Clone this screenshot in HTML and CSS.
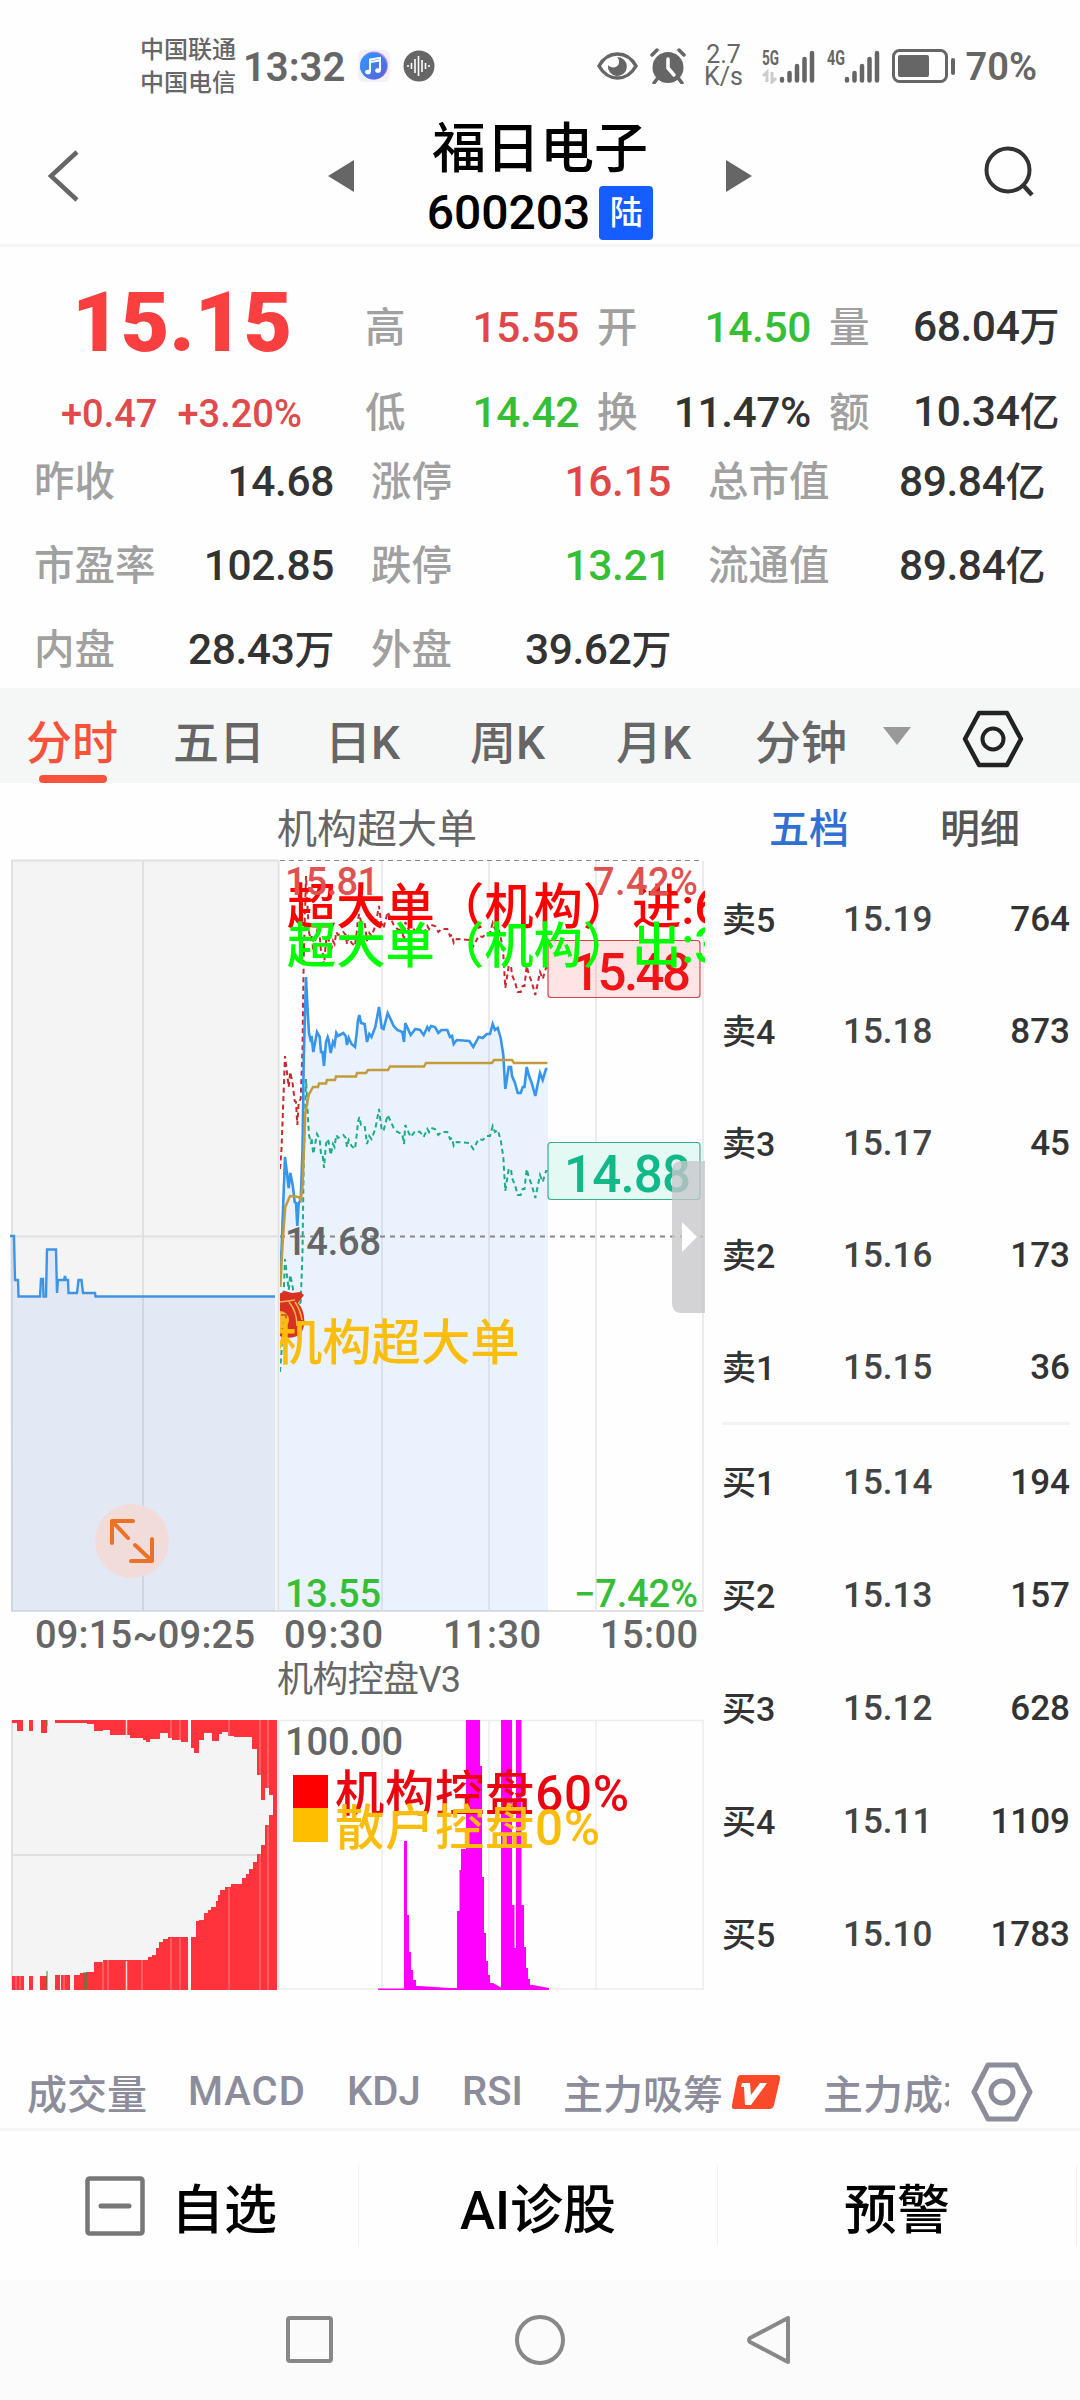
FILE: index.html
```html
<!DOCTYPE html>
<html lang="zh-CN">
<head>
    <meta charset="UTF-8">
    <title>福日电子 600203</title>
    <link rel="stylesheet" href="styles.css">
</head>
<body>
    <!-- Status bar -->
    <div class="status">
        <div class="carrier"><span>中国联通</span><span>中国电信</span></div>
        <span class="clock">13:32</span>
        <svg class="music" width="32" height="32" viewBox="0 0 32 32">
            <defs>
                <linearGradient id="musicFill" x1="0" y1="0" x2="1" y2="1">
                    <stop offset="0" stop-color="#2f9bff"/>
                    <stop offset="1" stop-color="#5b5fd8"/>
                </linearGradient>
            </defs>
            <rect width="32" height="32" rx="6" fill="#f0f2f6"/>
            <circle cx="16" cy="15.500" r="14" fill="#c98af0"/>
            <circle cx="15.500" cy="16" r="13.500" fill="url(#musicFill)"/>
            <path d="M12 22V9.500l10-1.500v12M12 12l10-1.500" fill="none" stroke="#fff" stroke-width="2"/>
            <ellipse cx="10" cy="22" rx="2.800" ry="2.300" fill="#fff"/>
            <ellipse cx="20" cy="20.500" rx="2.800" ry="2.300" fill="#fff"/>
        </svg>
        <svg class="wave" width="32" height="32" viewBox="0 0 32 32">
            <circle cx="16" cy="16" r="15.500" fill="#666"/>
            <path d="M5 15v2M8.500 13v6M12 9v14M15.500 6v20M19 10v12M22.500 13v6M26 15v2" stroke="#fff" stroke-width="1.600"/>
        </svg>
        <div class="status-right">
            <svg width="41" height="34" viewBox="0 0 41 34">
                <path d="M2 17C11 1 30 1 39 17C30 33 11 33 2 17Z" fill="none" stroke="#666" stroke-width="3.500"/>
                <path d="M20 8a9.500 9.500 0 1 1-9 8c3 4 10 3 11-2c.5-3-1-5-2-6Z" fill="#666"/>
            </svg>
            <svg class="alarm" width="36" height="36" viewBox="0 0 36 36">
                <circle cx="18" cy="19.500" r="15.500" fill="#666"/>
                <path d="M2 7l5-5M34 7l-5-5M7 31l-3 4M29 31l3 4" stroke="#666" stroke-width="3.500" stroke-linecap="round"/>
                <path d="M18 11v9l6 7" fill="none" stroke="#fff" stroke-width="3.500" stroke-linecap="round"/>
            </svg>
            <div class="speed"><span>2.7</span><span>K/s</span></div>
            <svg class="signal" width="54" height="36" viewBox="0 0 54 36">
                <text x="0" y="17" textLength="17" lengthAdjust="spacingAndGlyphs">5G</text>
                <path d="M5 34V24l-4 4M10 24v10l4-4" fill="none" stroke="#ccc" stroke-width="3"/>
                <path d="M20 31v1.500M27.500 25v7.500M35 18v14.500M42.500 11v21.500M50 5v27.500" stroke="#666" stroke-width="4.500" stroke-linecap="round"/>
            </svg>
            <svg class="signal" width="54" height="36" viewBox="0 0 54 36">
                <text x="0" y="17" textLength="18" lengthAdjust="spacingAndGlyphs">4G</text>
                <path d="M20 31v1.500M27.500 25v7.500M35 18v14.500M42.500 11v21.500M50 5v27.500" stroke="#666" stroke-width="4.500" stroke-linecap="round"/>
            </svg>
            <svg class="battery" width="64" height="34" viewBox="0 0 64 34">
                <rect x="1.500" y="1.500" width="53" height="31" rx="6" fill="none" stroke="#666" stroke-width="3"/>
                <rect x="6" y="6" width="31" height="22" rx="2" fill="#666"/>
                <rect x="59" y="9" width="4" height="17" rx="2" fill="#666"/>
            </svg>
            <span class="percent">70%</span>
        </div>
    </div>

    <!-- Stock title -->
    <div class="header">
        <svg class="back" width="36" height="56" viewBox="0 0 36 56">
            <path d="M31 4L5 28L31 52" fill="none" stroke="#666" stroke-width="4.500"/>
        </svg>
        <svg class="prev" width="26" height="32" viewBox="0 0 26 32"><path d="M26 0V32L0 16Z" fill="#666"/></svg>
        <div class="stock">
            <div class="stock-name">福日电子</div>
            <div class="stock-code">600203<span class="badge">陆</span></div>
        </div>
        <svg class="next" width="26" height="32" viewBox="0 0 26 32"><path d="M0 0V32L26 16Z" fill="#666"/></svg>
        <svg class="search" width="54" height="54" viewBox="0 0 54 54">
            <circle cx="25" cy="25" r="21.500" fill="none" stroke="#333" stroke-width="4"/>
            <path d="M40 40l9 10" stroke="#333" stroke-width="4.500"/>
        </svg>
    </div>

    <!-- Quote numbers -->
    <div class="quote">
        <div class="quote-top">
            <div class="price-box">
                <div class="price">15.15</div>
                <div class="change"><span>+0.47</span><span>+3.20%</span></div>
            </div>
            <div class="quote-grid">
                <div class="cell"><label>高</label><b class="up">15.55</b></div>
                <div class="cell"><label>开</label><b class="down">14.50</b></div>
                <div class="cell"><label>量</label><b>68.04<i>万</i></b></div>
                <div class="cell"><label>低</label><b class="down">14.42</b></div>
                <div class="cell"><label>换</label><b>11.47%</b></div>
                <div class="cell"><label>额</label><b>10.34<i>亿</i></b></div>
            </div>
        </div>
        <div class="quote-more">
            <div class="cell"><label>昨收</label><b>14.68</b></div>
            <div class="cell"><label>涨停</label><b class="up">16.15</b></div>
            <div class="cell"><label>总市值</label><b>89.84<i>亿</i></b></div>
            <div class="cell"><label>市盈率</label><b>102.85</b></div>
            <div class="cell"><label>跌停</label><b class="down">13.21</b></div>
            <div class="cell"><label>流通值</label><b>89.84<i>亿</i></b></div>
            <div class="cell"><label>内盘</label><b>28.43<i>万</i></b></div>
            <div class="cell"><label>外盘</label><b>39.62<i>万</i></b></div>
        </div>
    </div>

    <!-- Period tabs -->
    <div class="tabs">
        <div class="tab active">分时</div>
        <div class="tab">五日</div>
        <div class="tab">日K</div>
        <div class="tab">周K</div>
        <div class="tab">月K</div>
        <div class="tab">分钟</div>
        <svg class="caret" width="28" height="18" viewBox="0 0 28 18"><path d="M0 0H28L14 18Z" fill="#999"/></svg>
        <svg class="gear" width="62" height="60" viewBox="0 0 62 60">
            <path d="M17 4H45L59 30L45 56H17L3 30Z" fill="none" stroke="#222" stroke-width="4.500" stroke-linejoin="round"/>
            <circle cx="31" cy="30" r="10.500" fill="none" stroke="#222" stroke-width="4"/>
        </svg>
    </div>

    <div class="main">
        <svg class="chart" width="705" height="1217" viewBox="0 783 705 1217">
            <defs>
                <path id="priceLine" d="M280 1270L281.500 1250L285 1157L288.700 1188L290.300 1173L292.700 1185L294.700 1202L296 1203L297.300 1226L298.700 1203L300.700 1200L302.500 1150L303.700 1060L306 977L308 1017L309 1033L311 1042L311.500 1036L313.300 1052L317 1032L319.700 1037L321 1052L322.500 1052L324 1066L326 1042L327.700 1037L328.700 1040L330.700 1053L333 1042L334.500 1045L336.300 1033L338 1036L343.300 1033L345.700 1036L347 1045L348.700 1038L351.500 1044L355 1047L356.700 1033L358 1020L359.300 1015L361 1023L364.700 1024L367 1042L369.300 1034L371.500 1037L375.300 1027L379 1007L381.700 1028L383.500 1029L387.700 1013L393.700 1026L397.300 1030L402.300 1032L404 1042L405.300 1023L410.700 1035L415.300 1029L420 1030L423.700 1035L427.300 1027L429 1030L431 1026L435 1027L438.300 1033L441.500 1030L447.300 1030L450 1037L452 1036L453.700 1044L456.700 1040L469.300 1041L473.300 1047L478.700 1037L482.700 1038L486.700 1034L490 1034L492.700 1024L495 1030L497.700 1028L500.700 1038L503.300 1055L505.300 1089L508.700 1067L511 1067L512 1076L515 1083L517.700 1093L520.700 1093L522.700 1087L524.500 1087L526.700 1067L528.700 1075L531.700 1083L535.300 1096L540 1073L542.700 1080L546 1069L547.500 1069"/>
                <clipPath id="rightPane"><rect x="280" y="861" width="425" height="1130"/></clipPath>
            </defs>

            <!-- minute chart: frame and grid -->
            <text class="title" x="277" y="843">机构超大单</text>
            <rect x="11" y="860" width="266" height="751" fill="#f4f4f4"/>
            <path d="M11 860.500H278M11 1611H704M12 860V1611M143 860V1611M11 1236.500H278M278.500 860V1611" stroke="#e0e0e0" stroke-width="2" fill="none"/>
            <path d="M382 861V1611M489 861V1611M596 861V1611M703 861V1611" stroke="#ebebed" stroke-width="2"/>
            <path d="M280 860.500H703" stroke="#888" stroke-width="1" stroke-dasharray="5 4"/>

            <!-- call auction -->
            <path d="M10 1236H14L15 1280H18L18.500 1296.500H40L41 1279H43L43.500 1296.500H46L47 1249.500H56L57 1293L58 1280H64L65 1276L66 1280H68L68.500 1293H77L78.500 1280H81.500L83 1293H95L95.500 1296.500H275V1611H11Z" fill="#3c78f5" fill-opacity=".09"/>
            <path d="M10 1236H14L15 1280H18L18.500 1296.500H40L41 1279H43L43.500 1296.500H46L47 1249.500H56L57 1293L58 1280H64L65 1276L66 1280H68L68.500 1293H77L78.500 1280H81.500L83 1293H95L95.500 1296.500H275" fill="none" stroke="#3f94e4" stroke-width="2.400"/>

            <!-- trading hours -->
            <path d="M280 1270L285 1157L290 1173L297 1226L301 1200L304 1060L306 977L309 1033L313 1052L317 1032L321 1052L324 1066L328 1037L331 1053L336 1033L343 1033L347 1045L355 1047L359 1015L365 1024L367 1042L375 1027L379 1007L382 1028L388 1013L394 1026L402 1032L404 1042L405 1023L411 1035L415 1029L424 1035L427 1027L435 1027L447 1030L454 1044L457 1040L469 1041L473 1047L479 1037L490 1034L493 1024L501 1038L505 1089L509 1067L518 1093L521 1093L527 1067L535 1096L540 1073L548 1069V1611H280Z" fill="#2f86f5" fill-opacity=".1"/>
            <path d="M280 1236.500H703" stroke="#888" stroke-width="1.800" stroke-dasharray="5 5"/>
            <g clip-path="url(#rightPane)" fill="none">
                <use href="#priceLine" y="-101" stroke="#c82830" stroke-width="2" stroke-dasharray="5 3.500"/>
                <use href="#priceLine" y="102" stroke="#1fab84" stroke-width="2" stroke-dasharray="5 3.500"/>
                <use href="#priceLine" stroke="#3795ea" stroke-width="2.600"/>
                <path d="M280.300 1287L283 1237L285.300 1207L290 1196L298.700 1197L300.700 1200L302.500 1187L305.300 1113L308.700 1095L313 1087H318L319 1083.500H326L327 1080H335L336 1076.500H356L357 1073H366L368 1070H388L390 1066.500H424L426 1063H492L494 1060H512L514 1063H547.500" stroke="#c39a3c" stroke-width="2.500"/>
                <!-- money bag -->
                <g>
                    <path d="M279 1294l6-3 7 2 8-1 4 3-6 8c7 7 9 24 2 31-5 5-15 4-21 2Z" fill="#d8311f"/>
                    <path d="M280 1302l15-2M289 1302c6 7 8 15 8 24M295 1302c4 6 6 12 7 18" fill="none" stroke="#f6b64c" stroke-width="1.500"/>
                    <circle cx="280" cy="1320" r="9" fill="#f7b93a"/>
                    <path d="M281 1315h5v4l-3 5" fill="none" stroke="#c0551c" stroke-width="1.500"/>
                </g>
            </g>
            <g clip-path="url(#rightPane)" class="big">
                <text x="287" y="924" fill="#f00">超大单（机构）进:6</text>
                <rect x="548" y="940.500" width="152" height="57" rx="3" fill="#f00" fill-opacity=".1" stroke="#d04548" stroke-width="1.200"/>
                <text class="box-num" x="571" y="990" textLength="120" fill="#f01418">15.48</text>
                <text x="287" y="963" fill="#0f0">超大单（机构）出:3</text>
                <rect x="548" y="1142.500" width="152" height="57" rx="3" fill="#e5f9f4" stroke="#35b18e" stroke-width="1.200"/>
                <text class="box-num" x="564" y="1192" textLength="127" fill="#10b88a">14.88</text>
                <text x="273" y="1360" fill="#fbbd0c">机构超大单</text>
            </g>
            <g class="axis">
                <text x="285" y="895" textLength="94" fill="#e05250">15.81</text>
                <text x="698" y="895" text-anchor="end" textLength="105" fill="#e05250">7.42%</text>
                <text x="285" y="1255" textLength="96">14.68</text>
                <text x="285" y="1607" textLength="96" fill="#36bf36">13.55</text>
                <text x="698" y="1607" text-anchor="end" textLength="124" fill="#36bf36">−7.42%</text>
                <text x="35" y="1648" textLength="220">09:15~09:25</text>
                <text x="284" y="1648" textLength="99">09:30</text>
                <text x="443" y="1648" textLength="98">11:30</text>
                <text x="600" y="1648" textLength="98">15:00</text>
            </g>
            <circle cx="132" cy="1541" r="37" fill="#f2dcda"/>
            <path d="M133 1521H112V1543M112 1521L128 1538M152 1539V1561H131M152 1561L135 1545" fill="none" stroke="#ea7226" stroke-width="4" stroke-linecap="round" stroke-linejoin="round"/>
            <path d="M705 1161H682Q672 1161 672 1171V1303Q672 1313 682 1313H705Z" fill="#c6c6cb" fill-opacity=".78"/>
            <path d="M682 1222V1252L697 1237Z" fill="#fff"/>

            <!-- control indicator -->
            <text class="title small" x="277" y="1692" textLength="184">机构控盘V3</text>
            <rect x="11" y="1720" width="266" height="270" fill="#f4f4f4"/>
            <path d="M11 1855H277M12 1720V1990M278.500 1720V1990" stroke="#e0e0e0" stroke-width="2"/>
            <path d="M278 1720.500H704M278 1989H704M382 1720V1990M489 1720V1990M596 1720V1990M703 1720V1990" stroke="#ebebed" stroke-width="1.500"/>
            <path d="M12 1720V1723H17V1731H23V1720H29V1731H33V1720H41V1733H47V1720H55V1723H87V1724H94V1731H103V1730H110V1735H130V1738H143V1740H146V1742H150V1739H160V1733H168V1738H172V1740H181V1742H188V1720H191V1748H194V1753H199V1740H204V1733H212V1741H219V1734H222V1732H228V1736H234V1737H252V1749H257V1775H261V1800H265V1788H269V1795H273V1814H277V1720Z" fill="#ff333b"/>
            <path d="M12 1990V1976H24V1990H29V1976H33V1990H40V1976H47V1990H55V1975H60V1990H61V1975H70V1990H74V1975H80V1973H86V1972H94V1962H103V1960H148V1957H152V1955H156V1948H159V1942H163V1939H168V1937H188V1990H191V1937H196V1921H199V1920H204V1913H208V1910H211V1907H216V1901H218V1895H220V1890H225V1887H231V1884H242V1878H246V1874H249V1869H253V1862H257V1854H261V1845H265V1825H269V1815H273V1797H277V1990Z" fill="#ff333b"/>
            <path d="M126.500 1720V1739M126.500 1961V1990" stroke="#f8d8da" stroke-width="1.500"/>
            <path d="M171 1720V1738M180 1720V1740M229 1720V1736M260 1720V1775M268 1720V1788M16 1976V1990M20 1976V1990M64 1975V1990M103 1962V1990M108 1960V1990M142 1960V1990M171 1938V1990M180 1938V1990M229 1888V1990M260 1854V1990M268 1825V1990" stroke="#fff" stroke-opacity=".4" stroke-width="1"/>
            <path d="M47 1720V1726M47 1971V1990M84 1972V1990M86 1972V1990" stroke="#1d9a3c" stroke-width="1"/>
            <path d="M378 1988.500H404V1841H407V1915H409V1952H411V1970H413V1980H416V1986H419L450 1988H457V1911H459.500V1870H461V1849H466V1720H480V1766H482V1877H484V1933H486V1961H488V1975H490V1983H493L501 1987.500V1720H512V1905H514.500V1948H516V1720H521.500V1905H524V1947H526V1968H528V1979H530V1985H533L549 1988V1990H378Z" fill="#ff00ff"/>
            <g class="big">
                <rect x="293" y="1775" width="35" height="33" fill="#f00"/>
                <rect x="293" y="1808" width="35" height="34" fill="#ffbe00"/>
                <text x="335" y="1811" fill="#e90610" textLength="294">机构控盘60%</text>
                <text x="335" y="1845" fill="#fbbd0c" textLength="265">散户控盘0%</text>
            </g>
            <text class="hundred" x="285" y="1755" textLength="118">100.00</text>
        </svg>

        <!-- Order book -->
        <div class="book">
            <div class="book-tabs"><span class="on">五档</span><span>明细</span></div>
            <div class="orders">
                <div class="order"><span>卖5</span><em>15.19</em><strong>764</strong></div>
                <div class="order"><span>卖4</span><em>15.18</em><strong>873</strong></div>
                <div class="order"><span>卖3</span><em>15.17</em><strong>45</strong></div>
                <div class="order"><span>卖2</span><em>15.16</em><strong>173</strong></div>
                <div class="order"><span>卖1</span><em>15.15</em><strong>36</strong></div>
            </div>
            <div class="orders bids">
                <div class="order"><span>买1</span><em>15.14</em><strong>194</strong></div>
                <div class="order"><span>买2</span><em>15.13</em><strong>157</strong></div>
                <div class="order"><span>买3</span><em>15.12</em><strong>628</strong></div>
                <div class="order"><span>买4</span><em>15.11</em><strong>1109</strong></div>
                <div class="order"><span>买5</span><em>15.10</em><strong>1783</strong></div>
            </div>
        </div>
    </div>

    <!-- Indicator tabs -->
    <div class="indicators">
        <div class="indicator-list">
            <span class="vol">成交量</span>
            <span class="macd">MACD</span>
            <span class="kdj">KDJ</span>
            <span class="rsi">RSI</span>
            <span class="main-buy">主力吸筹</span>
            <svg class="vip" width="50" height="36" viewBox="0 0 50 36">
                <path d="M10 1H46Q50 1 49 5L43 31Q42 35 38 35H4Q0 35 1 31L6 5Q7 1 10 1Z" fill="#fb4a2a"/>
                <path d="M11 9h8l1 12 9-12h7L20 31h-6L13 13h-3Z" fill="#fff"/>
            </svg>
            <span>主力成本</span>
        </div>
        <svg class="gear" width="62" height="62" viewBox="0 0 62 62">
            <path d="M17 4H45L59 31L45 58H17L3 31Z" fill="none" stroke="#8c8c9b" stroke-width="5" stroke-linejoin="round"/>
            <circle cx="31" cy="31" r="11" fill="none" stroke="#8c8c9b" stroke-width="5"/>
        </svg>
    </div>

    <!-- Bottom actions -->
    <div class="actions">
        <div class="action">
            <svg width="60" height="60" viewBox="0 0 60 60">
                <rect x="2.500" y="2.500" width="55" height="55" rx="2" fill="none" stroke="#777" stroke-width="4.500"/>
                <path d="M16 30H44" stroke="#777" stroke-width="5" stroke-linecap="round"/>
            </svg>
            <span>自选</span>
        </div>
        <div class="action">AI诊股</div>
        <div class="action">预警</div>
    </div>

    <div class="navbar">
        <svg width="48" height="50" viewBox="0 0 48 50"><rect x="2" y="3" width="43" height="43" rx="2" fill="none" stroke="#888" stroke-width="4"/></svg>
        <svg width="50" height="50" viewBox="0 0 50 50"><circle cx="25" cy="25" r="23" fill="none" stroke="#888" stroke-width="4"/></svg>
        <svg width="48" height="50" viewBox="0 0 48 50"><path d="M42 3V47L4 27Q2 25 4 23Z" fill="none" stroke="#888" stroke-width="4" stroke-linejoin="round"/></svg>
    </div>
</body>
</html>
```
FILE: styles.css
```css
* {
    box-sizing: border-box;
}
body {
    margin: 0;
    width: 1080px;
    height: 2400px;
    overflow: hidden;
    background: #fefefe;
    color: #333;
    font-family: Roboto, "Noto Sans CJK SC", sans-serif;
}
svg {
    display: block;
    flex-shrink: 0;
}

/* status bar */
.status {
    display: flex;
    align-items: center;
    height: 104px;
    padding: 28px 43px 0 140px;
    color: #666;
}
.carrier {
    width: 103px;
    padding-top: 2px;
    font-size: 24px;
    font-weight: 500;
    line-height: 33px;
}
.carrier span {
    display: block;
}
.clock {
    width: 115px;
    padding-top: 2px;
    font-size: 40px;
    font-weight: 600;
}
.wave {
    margin-left: 13px;
}
.status-right {
    display: flex;
    align-items: center;
    margin-left: auto;
}
.alarm {
    margin-left: 12px;
}
.speed {
    width: 42px;
    margin: 0 17px 0 17px;
    font-size: 25px;
    line-height: 22px;
    text-align: center;
}
.speed span {
    display: block;
}
.signal {
    margin-right: 11px;
}
.signal text {
    font-size: 21px;
    font-weight: 700;
    fill: #666;
}
.battery {
    margin-right: 10px;
}
.percent {
    padding-top: 2px;
    font-size: 38px;
    font-weight: 600;
}

/* header */
.header {
    display: flex;
    height: 143px;
    padding-left: 46px;
    border-bottom: 3px solid #f5f5f5;
}
.back {
    margin-top: 44px;
}
.prev {
    margin: 56px 0 0 246px;
}
.stock {
    width: 372px;
    text-align: center;
    color: #000;
}
.stock-name {
    margin-top: 13px;
    font-size: 54px;
    font-weight: 500;
    line-height: 66px;
}
.stock-code {
    display: flex;
    justify-content: center;
    align-items: center;
    margin-top: 2px;
    height: 55px;
    font-size: 48px;
    font-weight: 500;
}
.badge {
    width: 54px;
    height: 54px;
    margin-left: 9px;
    border-radius: 4px;
    background: #165dff;
    color: #fff;
    font-size: 33px;
    line-height: 54px;
}
.next {
    margin-top: 56px;
}
.search {
    margin: 41px 0 0 231px;
}

/* quote */
.quote {
    height: 441px;
    padding-top: 38px;
}
.quote-top {
    display: flex;
    height: 170px;
}
.price-box {
    width: 365px;
}
.price {
    height: 86px;
    padding-left: 72px;
    color: #f93f40;
    font-size: 84px;
    font-weight: 900;
    line-height: 75px;
}
.change {
    display: flex;
    gap: 20px;
    margin-top: 20px;
    padding-left: 61px;
    color: #e04a4a;
    font-size: 38px;
    font-weight: 500;
    line-height: 46px;
}
.quote-grid {
    display: grid;
    grid-template-columns: 214px 214px 230px;
    grid-template-rows: 85px 85px;
    column-gap: 18px;
    width: 696px;
}
.quote-more {
    display: grid;
    grid-template-columns: 300px 300px 337px;
    grid-auto-rows: 84px;
    column-gap: 37px;
    margin-top: -15px;
    padding-left: 34px;
}
.cell {
    display: flex;
    align-items: center;
    justify-content: space-between;
    line-height: 84px;
    white-space: nowrap;
}
.cell label {
    color: #a0a0a0;
    font-size: 40.5px;
    font-weight: 500;
}
.cell b {
    font-size: 42.5px;
    font-weight: 500;
    letter-spacing: -0.4px;
}
.cell i {
    font-size: 40px;
    font-style: normal;
}
.cell .up {
    color: #e04848;
}
.cell .down {
    color: #36bf36;
}

/* period tabs */
.tabs {
    display: flex;
    align-items: center;
    height: 95px;
    padding-left: 26px;
    background: #f5f7f6;
    color: #666;
    font-size: 46px;
    font-weight: 500;
    line-height: 88px;
}
.tab {
    width: 147px;
    height: 95px;
    padding-top: 11px;
}
.tab:nth-child(3) {
    width: 149px;
    padding-left: 5px;
}
.tab:nth-child(4) {
    width: 147px;
    padding-left: 1px;
}
.tab:nth-child(5) {
    width: 139px;
}
.tab:nth-child(6) {
    width: 112px;
}
.tab.active {
    color: #f9513b;
}
.tab.active::after {
    content: "";
    display: block;
    width: 68px;
    height: 8px;
    margin: -12px 0 0 13px;
    border-radius: 4px;
    background: #f9513b;
}
.caret {
    margin-left: 16px;
}
.tabs .gear {
    margin-left: 51px;
    margin-top: 6px;
}

/* chart */
.main {
    display: flex;
    height: 1258px;
}
.chart .title {
    font-size: 40px;
    fill: #666;
}
.chart .small {
    font-size: 36px;
}
.big {
    font-size: 49.3px;
    font-weight: 500;
}
.big .box-num {
    font-size: 51px;
}
.axis,
.hundred {
    font-size: 38px;
    font-weight: 500;
    fill: #666;
}

/* order book */
.book {
    width: 348px;
    margin-left: 17px;
}
.book-tabs {
    display: flex;
    height: 92px;
    padding-left: 47px;
    gap: 91px;
    color: #555;
    font-size: 40px;
    font-weight: 500;
    line-height: 94px;
}
.book-tabs .on {
    color: #2f70d2;
}
.orders {
    height: 549px;
    margin-top: -11px;
}
.bids {
    padding-top: 2px;
    margin-top: 9px;
    border-top: 3px solid #f3f3f3;
}
.order {
    display: grid;
    grid-template-columns: 121px 100px 1fr;
    height: 112px;
    font-size: 35px;
    font-weight: 500;
    line-height: 112px;
}
.bids .order {
    height: 113px;
}
.order span {
    font-size: 34px;
}
.order em {
    color: #444;
    font-style: normal;
}
.order strong {
    font-weight: 500;
    text-align: right;
}

/* indicator tabs */
.indicators {
    display: flex;
    align-items: center;
    height: 90px;
    padding: 14px 0 0 27px;
    border-bottom: 3px solid #f4f6f6;
    color: #8c8c9b;
    font-size: 40px;
    font-weight: 500;
}
.indicator-list {
    display: flex;
    align-items: center;
    width: 922px;
    overflow: hidden;
    white-space: nowrap;
}
.indicator-list span {
    flex-shrink: 0;
}
.vol {
    width: 161px;
}
.macd {
    width: 159px;
    letter-spacing: 1px;
}
.kdj {
    width: 115px;
}
.rsi {
    width: 101px;
}
.main-buy {
    width: 168px;
}
.vip {
    margin-right: 42px;
}
.indicators .gear {
    margin-left: 22px;
}

/* bottom actions */
.actions {
    display: flex;
    height: 149px;
    padding: 34px 0;
}
.action {
    display: flex;
    align-items: center;
    justify-content: center;
    width: 359px;
    border-right: 1px solid #f0f0f0;
    color: #000;
    font-size: 53px;
    font-weight: 500;
}
.action span {
    margin-left: 26px;
}
.action:first-child {
    padding-left: 4px;
}
.navbar {
    display: flex;
    justify-content: center;
    align-items: center;
    gap: 181px;
    height: 120px;
    background: #fbfbfb;
}
```
